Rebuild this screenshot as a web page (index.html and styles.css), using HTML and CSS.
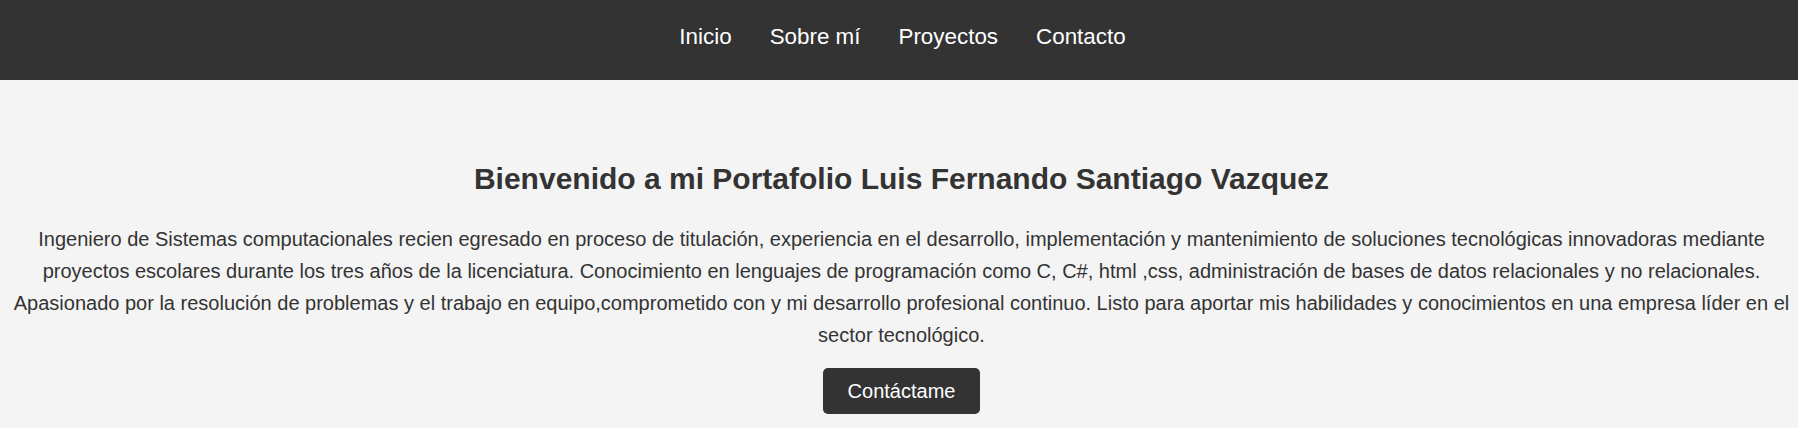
FILE: index.html
```html
<!DOCTYPE html>
<html lang="es">
<head>
<meta charset="utf-8">
<title>Portafolio</title>
<link rel="stylesheet" href="styles.css">
</head>
<body>
<header class="site-header">
  <nav class="nav">
    <a class="nav-link" href="#inicio">Inicio</a>
    <a class="nav-link" href="#sobre">Sobre mí</a>
    <a class="nav-link" href="#proyectos">Proyectos</a>
    <a class="nav-link" href="#contacto">Contacto</a>
  </nav>
</header>
<main>
  <section class="hero" id="inicio">
    <h2 class="hero-title">Bienvenido a mi Portafolio Luis Fernando Santiago Vazquez</h2>
    <p class="hero-text">Ingeniero de Sistemas computacionales recien egresado en proceso de titulación, experiencia en el desarrollo, implementación y mantenimiento de soluciones tecnológicas innovadoras mediante proyectos escolares durante los tres años de la licenciatura. Conocimiento en lenguajes de programación como C, C#, html ,css, administración de bases de datos relacionales y no relacionales. Apasionado por la resolución de problemas y el trabajo en equipo,comprometido con y mi desarrollo profesional continuo. Listo para aportar mis habilidades y conocimientos en una empresa líder en el sector tecnológico.</p>
    <a class="btn" href="#contacto">Contáctame</a>
  </section>
</main>
</body>
</html>
```
FILE: styles.css
```css
html, body {
  margin: 0;
  padding: 0;
}
body {
  background: #f4f4f4;
  color: #333333;
  font-family: "Liberation Sans", Arial, sans-serif;
}
.site-header {
  background: #333333;
  height: 80px;
  box-sizing: border-box;
  padding: 24px 0 0 7px;
}
.nav {
  display: flex;
  justify-content: center;
  gap: 38px;
}
.nav-link {
  color: #ffffff;
  text-decoration: none;
  font-size: 22.4px;
  line-height: 25px;
}
.hero {
  text-align: center;
  padding: 82px 5px 0 10px;
}
.hero-title {
  margin: 0 0 27px;
  font-size: 30px;
  line-height: 34px;
  font-weight: bold;
}
.hero-text {
  margin: 0 0 17px;
  font-size: 20px;
  line-height: 32px;
}
.btn {
  display: inline-block;
  background: #333333;
  color: #ffffff;
  text-decoration: none;
  font-size: 20px;
  line-height: 23px;
  padding: 12px 25px 11px;
  border-radius: 5px;
}
```
